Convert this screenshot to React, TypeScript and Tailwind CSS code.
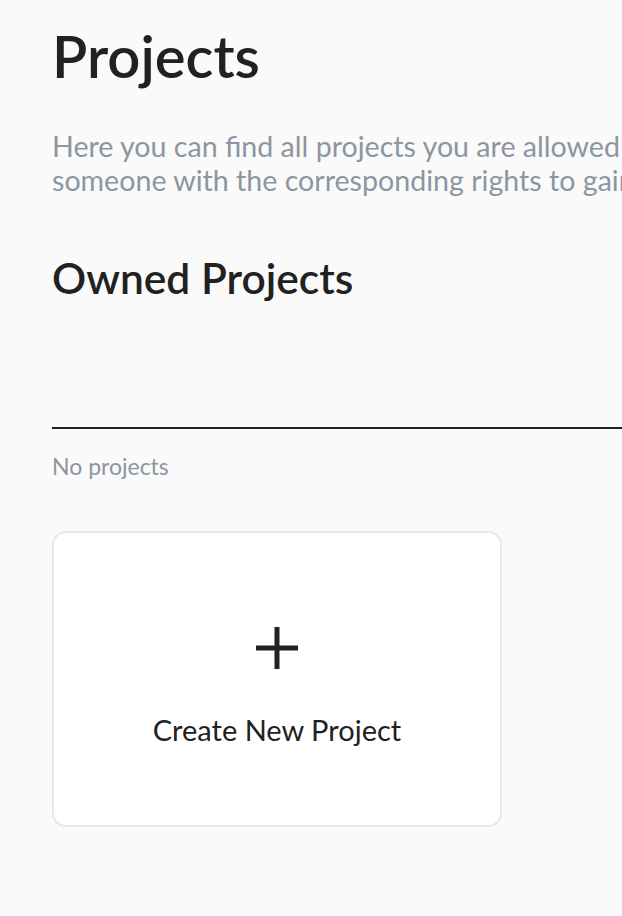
import React from "react";

const PlusIcon = () => (
  <svg width="44" height="44" viewBox="0 0 44 44" fill="none">
    <path d="M22 1v42M1 22h42" stroke="#222222" strokeWidth="5" />
  </svg>
);

const App = () => {
  return (
    <div className="w-[622px] h-[916px] overflow-hidden bg-[#fafafa] text-[#212121] font-['Lato','Liberation_Sans',sans-serif]">
      <div className="w-[1100px] pl-[52px] pt-[18px]">
        <h1 className="text-[58px] leading-[76px] font-semibold">Projects</h1>
        <p className="mt-[35px] text-[28.6px] leading-[34px] text-[#8c96a0] whitespace-nowrap">
          Here you can find all projects you are allowed to view. If you are missing a project, please contact
          <br />
          someone with the corresponding rights to gain access to it.
        </p>
        <h2 className="mt-[56px] text-[42.5px] leading-[50px] font-semibold">Owned Projects</h2>
        <div className="mt-[124px] border-t-2 border-[#222222]" />
        <p className="mt-[22px] text-[23px] leading-[30px] text-[#8c96a0]">No projects</p>
        <button className="mt-[50px] w-[450px] h-[296px] flex flex-col items-center pt-[93px] gap-[43px] bg-white border-2 border-[#e8e8e8] rounded-[14px]">
          <PlusIcon />
          <span className="text-[29px] leading-[34px]">Create New Project</span>
        </button>
      </div>
    </div>
  );
};

export default App;
